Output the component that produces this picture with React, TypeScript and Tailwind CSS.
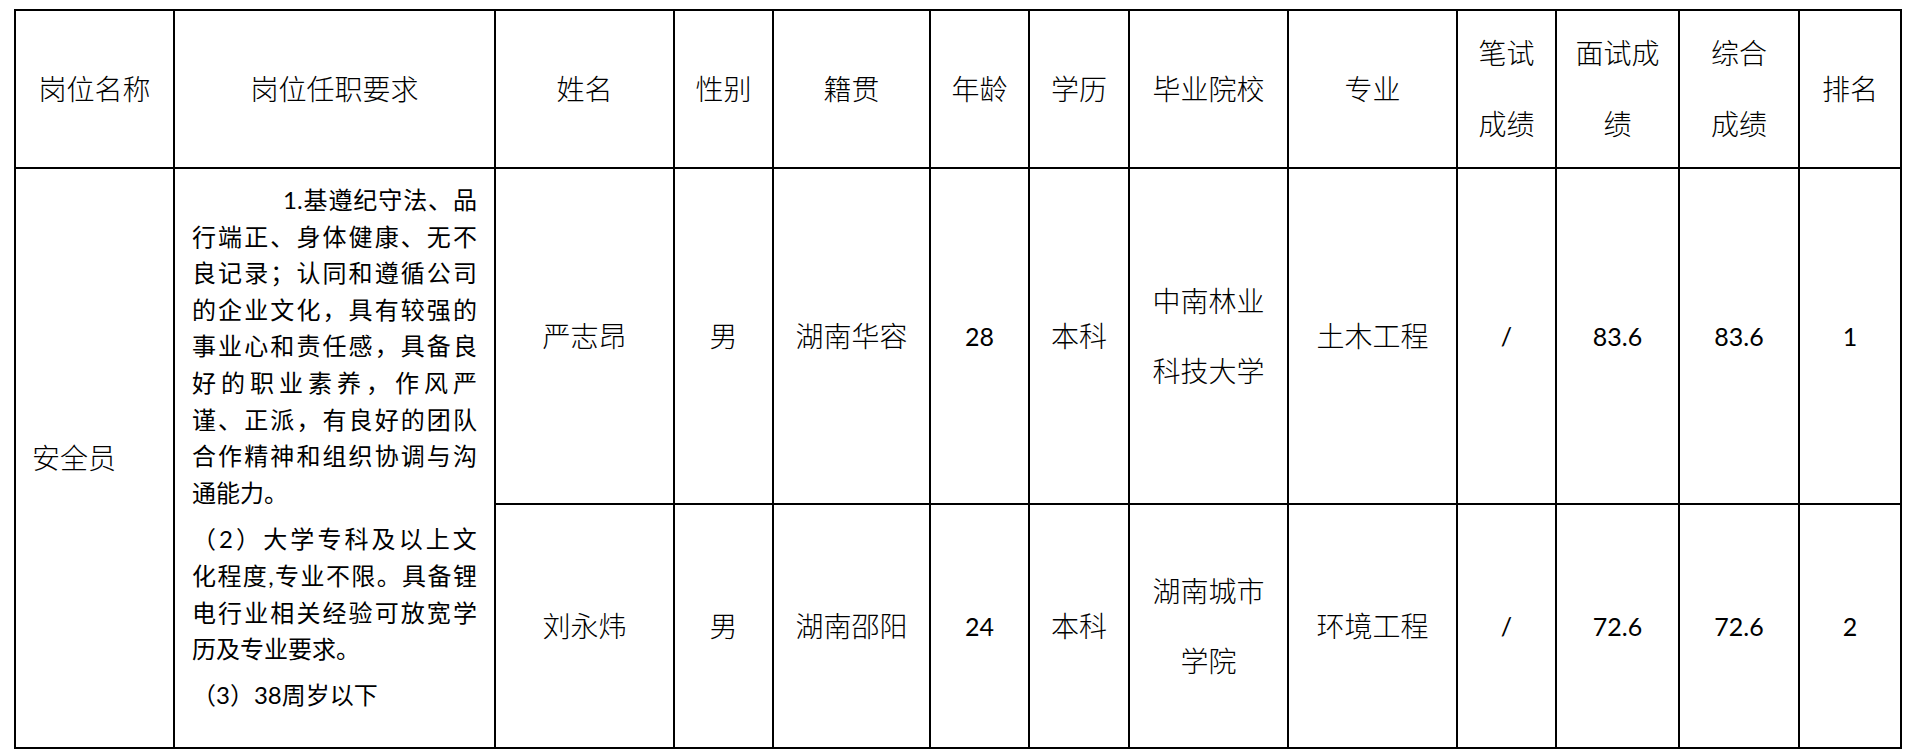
import React from "react";

const FONT = "[font-family:Lato,'Noto_Sans_CJK_SC',sans-serif]";

function H({ children }: { children: React.ReactNode }) {
  return (
    <div className="bg-white flex items-center justify-center text-center text-[28px] leading-[71px] text-black font-light">
      <div>{children}</div>
    </div>
  );
}

function D({ children, num }: { children: React.ReactNode; num?: boolean }) {
  return (
    <div
      className={
        num
          ? "bg-white flex items-center justify-center text-center text-[25px] leading-[70px] text-black"
          : "bg-white flex items-center justify-center text-center text-[28px] leading-[70px] text-black font-light"
      }
    >
      <div>{children}</div>
    </div>
  );
}

function JLine({ tokens, first }: { tokens: string[]; first?: boolean }) {
  return (
    <div
      className={
        first
          ? "flex justify-between h-[36.6px] leading-[36.6px] pl-[91px]"
          : "flex justify-between h-[36.6px] leading-[36.6px]"
      }
    >
      {tokens.map((t, i) => (
        <span key={i}>{t}</span>
      ))}
    </div>
  );
}

const chars = (s: string) => Array.from(s);

export default function App() {
  return (
    <div className={"min-h-screen bg-white text-black " + FONT}>
      <div className="pl-[14px] pt-[9px]">
        <div className="grid w-fit bg-black p-[2px] gap-[2px] grid-cols-[157px_319px_177px_97px_155px_97px_98px_157px_167px_97px_121px_118px_100px] grid-rows-[156px_334px_242px]">
          {/* header */}
          <H>岗位名称</H>
          <H>岗位任职要求</H>
          <H>姓名</H>
          <H>性别</H>
          <H>籍贯</H>
          <H>年龄</H>
          <H>学历</H>
          <H>毕业院校</H>
          <H>专业</H>
          <H>
            笔试
            <br />
            成绩
          </H>
          <H>
            面试成
            <br />
            绩
          </H>
          <H>
            综合
            <br />
            成绩
          </H>
          <H>排名</H>

          {/* position name */}
          <div className="bg-white row-span-2 flex items-center pl-[16px] text-[28px] leading-[40px] font-light">
            安全员
          </div>

          {/* requirements */}
          <div className="bg-white row-span-2 pt-[13px] pl-[17px] pr-[17px] text-[24px]">
            <JLine first tokens={["1.", ...chars("基遵纪守法、品")]} />
            <JLine tokens={chars("行端正、身体健康、无不")} />
            <JLine tokens={chars("良记录；认同和遵循公司")} />
            <JLine tokens={chars("的企业文化，具有较强的")} />
            <JLine tokens={chars("事业心和责任感，具备良")} />
            <JLine tokens={chars("好的职业素养，作风严")} />
            <JLine tokens={chars("谨、正派，有良好的团队")} />
            <JLine tokens={chars("合作精神和组织协调与沟")} />
            <div className="h-[36.6px] leading-[36.6px]">通能力。</div>
            <div className="mt-[10px]">
              <JLine tokens={["（", "2", "）", ...chars("大学专科及以上文")]} />
              <JLine tokens={chars("化程度,专业不限。具备锂")} />
              <JLine tokens={chars("电行业相关经验可放宽学")} />
              <div className="h-[36.6px] leading-[36.6px]">历及专业要求。</div>
            </div>
            <div className="mt-[9.5px] h-[36.6px] leading-[36.6px]">（3）38周岁以下</div>
          </div>

          {/* row 1 */}
          <D>严志昂</D>
          <D>男</D>
          <D>湖南华容</D>
          <D num>28</D>
          <D>本科</D>
          <D>
            中南林业
            <br />
            科技大学
          </D>
          <D>土木工程</D>
          <D num>/</D>
          <D num>83.6</D>
          <D num>83.6</D>
          <D num>1</D>

          {/* row 2 */}
          <D>刘永炜</D>
          <D>男</D>
          <D>湖南邵阳</D>
          <D num>24</D>
          <D>本科</D>
          <D>
            湖南城市
            <br />
            学院
          </D>
          <D>环境工程</D>
          <D num>/</D>
          <D num>72.6</D>
          <D num>72.6</D>
          <D num>2</D>
        </div>
      </div>
    </div>
  );
}
